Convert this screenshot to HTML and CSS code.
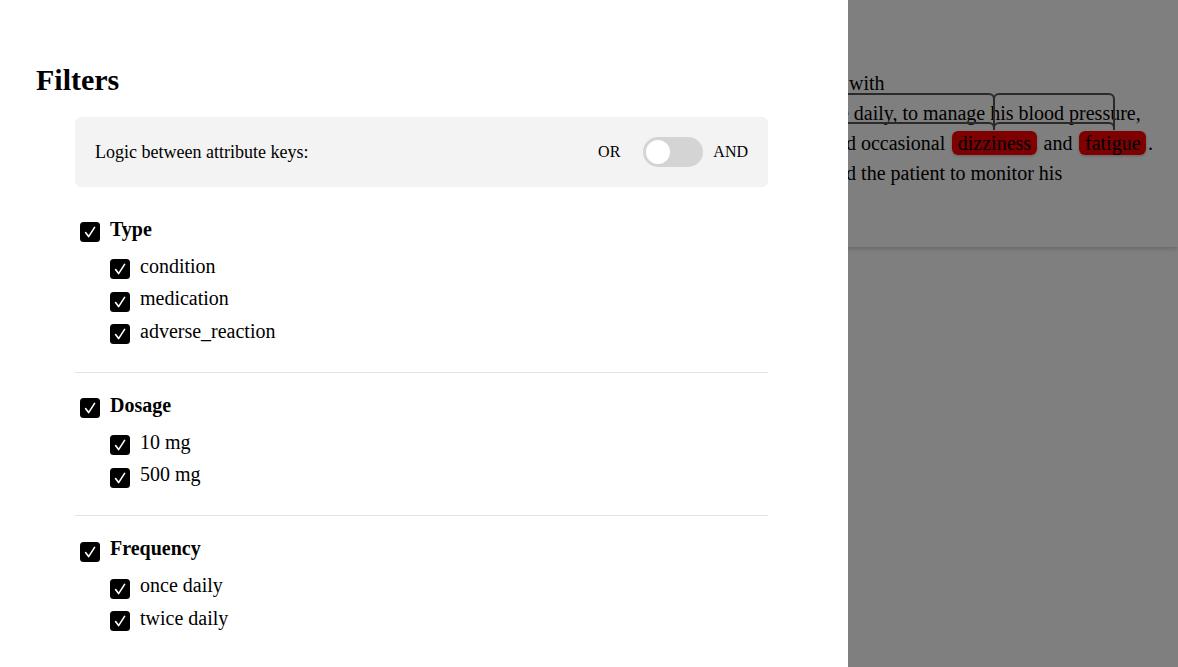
FILE: index.html
```html
<!DOCTYPE html>
<html lang="en">
<head>
<meta charset="utf-8">
<title>Filters</title>
<link rel="stylesheet" href="styles.css">
</head>
<body>
<div class="page">
  <div class="card">
    <div class="ln l1">with</div>
    <div class="ln l2">once daily, to manage his blood pressure,</div>
    <div class="ln l3">and occasional <span class="ent">dizziness</span> and <span class="ent">fatigue</span>.</div>
    <div class="ln l4">advised the patient to monitor his</div>
    <div class="arc arc-a"></div>
    <div class="arc arc-b"></div>
    <div class="arc arc-c"></div>
    <div class="arc arc-d"></div>
  </div>
</div>
<div class="overlay"></div>
<aside class="drawer">
  <h2 class="title">Filters</h2>
  <div class="filters">
    <div class="logic">
      <span class="logic-label">Logic between attribute keys:</span>
      <div class="logic-switch">
        <span class="opt">OR</span>
        <span class="toggle"><span class="knob"></span></span>
        <span class="opt opt-and">AND</span>
      </div>
    </div>

    <section class="group">
      <div class="row head"><span class="cb"><svg viewBox="0 0 20 20"><path d="M5.6 10.6 L8.6 14.6 L14.6 5.4"/></svg></span><span class="lbl">Type</span></div>
      <div class="subs">
        <div class="row"><span class="cb"><svg viewBox="0 0 20 20"><path d="M5.6 10.6 L8.6 14.6 L14.6 5.4"/></svg></span><span class="lbl">condition</span></div>
        <div class="row"><span class="cb"><svg viewBox="0 0 20 20"><path d="M5.6 10.6 L8.6 14.6 L14.6 5.4"/></svg></span><span class="lbl">medication</span></div>
        <div class="row"><span class="cb"><svg viewBox="0 0 20 20"><path d="M5.6 10.6 L8.6 14.6 L14.6 5.4"/></svg></span><span class="lbl">adverse_reaction</span></div>
      </div>
    </section>

    <section class="group">
      <div class="row head"><span class="cb"><svg viewBox="0 0 20 20"><path d="M5.6 10.6 L8.6 14.6 L14.6 5.4"/></svg></span><span class="lbl">Dosage</span></div>
      <div class="subs">
        <div class="row"><span class="cb"><svg viewBox="0 0 20 20"><path d="M5.6 10.6 L8.6 14.6 L14.6 5.4"/></svg></span><span class="lbl">10 mg</span></div>
        <div class="row"><span class="cb"><svg viewBox="0 0 20 20"><path d="M5.6 10.6 L8.6 14.6 L14.6 5.4"/></svg></span><span class="lbl">500 mg</span></div>
      </div>
    </section>

    <section class="group">
      <div class="row head"><span class="cb"><svg viewBox="0 0 20 20"><path d="M5.6 10.6 L8.6 14.6 L14.6 5.4"/></svg></span><span class="lbl">Frequency</span></div>
      <div class="subs">
        <div class="row"><span class="cb"><svg viewBox="0 0 20 20"><path d="M5.6 10.6 L8.6 14.6 L14.6 5.4"/></svg></span><span class="lbl">once daily</span></div>
        <div class="row"><span class="cb"><svg viewBox="0 0 20 20"><path d="M5.6 10.6 L8.6 14.6 L14.6 5.4"/></svg></span><span class="lbl">twice daily</span></div>
      </div>
    </section>
  </div>
</aside>
</body>
</html>
```

FILE: styles.css
```css
* { box-sizing: border-box; }
html, body { margin: 0; padding: 0; }
body {
  background: #fff;
  font-family: "Liberation Serif", "Times New Roman", serif;
  color: #000;
  overflow: hidden;
}

/* background document */
.page { width: 100%; height: 667px; }
.card {
  position: relative;
  background: #fff;
  padding: 68px 0 59px;
  box-shadow: 0 2px 5px rgba(0, 0, 0, 0.18);
  font-size: 20px;
  line-height: 30px;
}
.ln { white-space: nowrap; }
.l1 { padding-left: 849px; }
.l2 { padding-left: 811px; }
.l3 { padding-left: 827px; }
.l4 { padding-left: 795px; }
.ent {
  background: #ff0000;
  border-radius: 6px;
  padding: 1px 5.5px;
  margin: 0 2px;
  box-shadow: 0 1px 3px rgba(0, 0, 0, 0.25);
}
.arc {
  position: absolute;
  border: 2px solid #555;
  border-bottom: none;
  border-radius: 6px 6px 0 0;
}
.arc-a { left: 700px; width: 295px; top: 93px; height: 37px; }
.arc-b { left: 993px; width: 122px; top: 93px; height: 37px; }
.arc-c { left: 700px; width: 295px; top: 122px; height: 8px; }
.arc-d { left: 993px; width: 122px; top: 122px; height: 8px; }

.overlay {
  position: fixed;
  inset: 0;
  background: rgba(0, 0, 0, 0.5);
}

/* drawer */
.drawer {
  position: fixed;
  left: 0;
  top: 0;
  bottom: 0;
  width: 848px;
  background: #fff;
  padding: 62px 36px 0;
}
.title {
  margin: 0 0 19px;
  font-size: 30px;
  line-height: 36px;
  font-weight: bold;
}
.filters {
  margin-left: 39px;
  width: 693px;
}
.logic {
  height: 70px;
  background: #f3f3f3;
  border-radius: 6px;
  padding: 0 20px;
  display: flex;
  align-items: center;
  justify-content: space-between;
  font-size: 16px;
  margin-bottom: 9.5px;
}
.logic-label { font-size: 18px; }
.logic-switch { display: flex; align-items: center; }
.toggle {
  width: 60px;
  height: 30px;
  border-radius: 15px;
  background: #d4d4d4;
  margin: 0 10px 0 23px;
  padding: 3px;
  display: flex;
}
.knob {
  width: 24px;
  height: 24px;
  border-radius: 50%;
  background: #fff;
}

.group {
  padding: 21.5px 0 21px 5px;
  border-bottom: 1px solid #e5e5e5;
}
.group:last-child { border-bottom: none; }
.row {
  display: flex;
  align-items: center;
  height: 32.5px;
  font-size: 20px;
}
.row.head { height: 28px; font-weight: bold; }
.subs { margin-top: 7px; padding-left: 30px; }
.lbl { margin-left: 10px; position: relative; top: -3px; }
.cb {
  width: 20px;
  height: 20px;
  background: #000;
  border-radius: 3.5px;
  display: flex;
  flex: none;
}
.cb svg { width: 20px; height: 20px; }
.cb path {
  fill: none;
  stroke: #fff;
  stroke-width: 1.6;
  stroke-linecap: round;
  stroke-linejoin: round;
}
```
